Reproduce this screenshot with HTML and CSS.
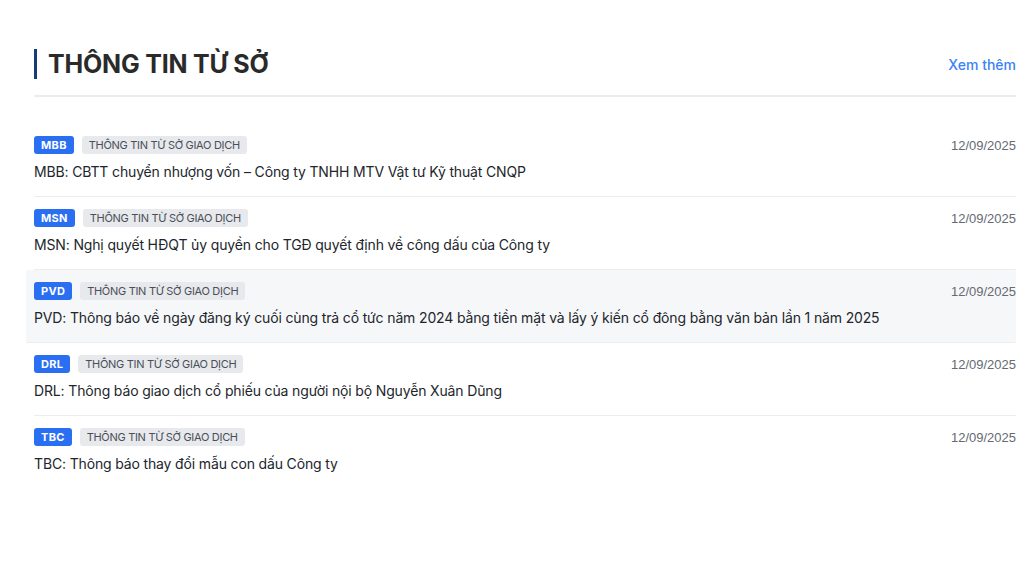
FILE: index.html
```html
<!DOCTYPE html>
<html lang="vi">
<head>
<meta charset="utf-8">
<title>Thông tin từ sở</title>
<link rel="stylesheet" href="styles.css">
</head>
<body>
<section class="news">
  <header class="news-head">
    <h2 class="news-title">THÔNG TIN TỪ SỞ</h2>
    <a class="more" href="#">Xem thêm</a>
  </header>
  <ul class="list">
    <li class="item">
      <div class="meta">
        <div class="tags"><span class="code">MBB</span><span class="tag">THÔNG TIN TỪ SỞ GIAO DỊCH</span></div>
        <span class="date">12/09/2025</span>
      </div>
      <p class="headline">MBB: CBTT chuyển nhượng vốn – Công ty TNHH MTV Vật tư Kỹ thuật CNQP</p>
    </li>
    <li class="item">
      <div class="meta">
        <div class="tags"><span class="code">MSN</span><span class="tag">THÔNG TIN TỪ SỞ GIAO DỊCH</span></div>
        <span class="date">12/09/2025</span>
      </div>
      <p class="headline">MSN: Nghị quyết HĐQT ủy quyền cho TGĐ quyết định về công dấu của Công ty</p>
    </li>
    <li class="item is-hover">
      <div class="meta">
        <div class="tags"><span class="code">PVD</span><span class="tag">THÔNG TIN TỪ SỞ GIAO DỊCH</span></div>
        <span class="date">12/09/2025</span>
      </div>
      <p class="headline">PVD: Thông báo về ngày đăng ký cuối cùng trả cổ tức năm 2024 bằng tiền mặt và lấy ý kiến cổ đông bằng văn bản lần 1 năm 2025</p>
    </li>
    <li class="item">
      <div class="meta">
        <div class="tags"><span class="code">DRL</span><span class="tag">THÔNG TIN TỪ SỞ GIAO DỊCH</span></div>
        <span class="date">12/09/2025</span>
      </div>
      <p class="headline">DRL: Thông báo giao dịch cổ phiếu của người nội bộ Nguyễn Xuân Dũng</p>
    </li>
    <li class="item">
      <div class="meta">
        <div class="tags"><span class="code">TBC</span><span class="tag">THÔNG TIN TỪ SỞ GIAO DỊCH</span></div>
        <span class="date">12/09/2025</span>
      </div>
      <p class="headline">TBC: Thông báo thay đổi mẫu con dấu Công ty</p>
    </li>
  </ul>
</section>
</body>
</html>
```

FILE: styles.css
```css
* { box-sizing: border-box; }
html, body { margin: 0; padding: 0; background: #fff; }
body {
  font-family: Inter, "Noto Sans", "Liberation Sans", sans-serif;
  color: #1f2328;
}
.news {
  padding: 49px 8px 0 34px;
}
.news-head {
  display: flex;
  align-items: center;
  justify-content: space-between;
  padding-bottom: 16px;
  border-bottom: 2px solid #ececec;
}
.news-title {
  margin: 0;
  font-size: 25px;
  line-height: 30px;
  font-weight: 700;
  color: #2a2a2a;
  border-left: 3px solid #173a7a;
  padding-left: 11px;
  letter-spacing: -0.2px;
}
.more {
  font-size: 14px;
  color: #3b82f6;
  text-decoration: none;
  font-weight: 500;
}
.list {
  list-style: none;
  margin: 27px 0 0;
  padding: 0;
}
.item {
  padding: 12px 0;
  border-bottom: 1px solid #ededed;
}
.item:last-child { border-bottom: none; }
.item.is-hover {
  background: #f6f7f9;
  margin-left: -8px;
  padding-left: 8px;
  border-radius: 2px;
}
.meta {
  display: flex;
  align-items: center;
  justify-content: space-between;
  height: 18px;
}
.tags {
  display: flex;
  gap: 8px;
  align-items: center;
}
.code {
  background: #2a6ff2;
  color: #fff;
  font-size: 11px;
  font-weight: 700;
  line-height: 18px;
  height: 18px;
  padding: 0 7px;
  border-radius: 3px;
  letter-spacing: 0.3px;
}
.tag {
  background: #e7e9ec;
  color: #4a4f57;
  font-size: 11px;
  line-height: 18px;
  height: 18px;
  padding: 0 7px;
  border-radius: 3px;
  letter-spacing: -0.3px;
}
.date {
  font-size: 13px;
  font-family: "Liberation Sans", Arial, sans-serif;
  color: #656a72;
}
.headline {
  margin: 6px 0 0;
  font-size: 14px;
  line-height: 24px;
  color: #22262b;
  letter-spacing: -0.15px;
}
```
